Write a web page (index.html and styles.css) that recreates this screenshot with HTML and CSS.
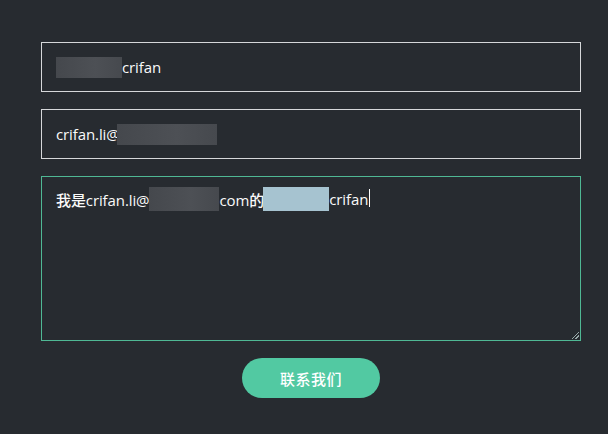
FILE: index.html
```html
<!DOCTYPE html>
<html lang="zh">
<head>
<meta charset="utf-8">
<link rel="stylesheet" href="styles.css">
</head>
<body>
<form class="form">
  <div class="field"><span class="blur blur-name"></span>crifan</div>
  <div class="field">crifan.li@<span class="blur blur-mail"></span></div>
  <div class="field area">我是crifan.li@<span class="blur blur-a"></span>com的<span class="sel"></span>crifan<span class="caret"></span><span class="grip"></span></div>
  <div class="actions"><button type="button" class="btn">联系我们</button></div>
</form>
</body>
</html>
```
FILE: styles.css
```css
html, body {
  margin: 0;
  background: #272b30;
  height: 100%;
}
body {
  font-family: "Open Sans", "Noto Sans CJK SC", sans-serif;
  color: #fafafa;
}
.form {
  width: 540px;
  margin-left: 41px;
  padding-top: 42px;
  display: flex;
  flex-direction: column;
  gap: 17px;
}
.field {
  box-sizing: border-box;
  height: 50px;
  border: 1px solid #d6d8da;
  padding: 0 14px;
  display: flex;
  align-items: center;
  font-size: 15px;
  font-weight: 500;
  letter-spacing: -0.1px;
  position: relative;
}
.field.area {
  height: 165px;
  align-items: flex-start;
  padding-top: 12px;
  border-color: #4fb894;
}
.blur {
  display: inline-block;
  background: linear-gradient(90deg, #45484d, #4d5055 60%, #46494e);
  height: 21px;
}
.blur-name { width: 66px; }
.blur-mail { width: 100px; margin-left: -3px; }
.blur-a { width: 70px; height: 24px; margin-top: -2px; }
.sel {
  display: inline-block;
  width: 66px;
  height: 24px;
  margin-top: -2px;
  margin-left: -1px;
  background: #a6c3d0;
}
.caret {
  display: inline-block;
  width: 1px;
  height: 18px;
  background: #ffffff;
  margin-left: 1px;
}
.grip {
  position: absolute;
  right: 1px;
  bottom: 1px;
  width: 7px;
  height: 7px;
  background: linear-gradient(135deg, transparent 45%, #9aa 46%, #9aa 54%, transparent 55%, transparent 70%, #9aa 71%, #9aa 79%, transparent 80%);
}
.actions {
  display: flex;
  justify-content: center;
}
.btn {
  width: 138px;
  height: 40px;
  border: none;
  border-radius: 20px;
  background: #52c9a2;
  color: #ffffff;
  font-family: "Noto Sans CJK SC", sans-serif;
  font-size: 15px;
  font-weight: 500;
  letter-spacing: 0.5px;
  padding: 0;
}
```
